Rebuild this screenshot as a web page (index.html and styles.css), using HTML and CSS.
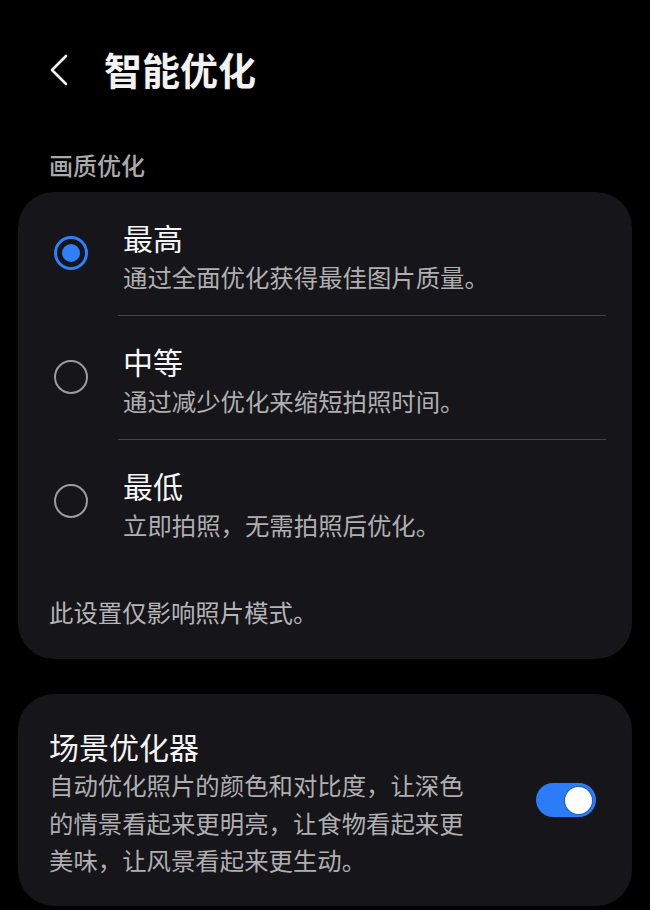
FILE: index.html
```html
<!DOCTYPE html>
<html lang="zh-CN">
<head>
    <meta charset="UTF-8">
    <meta name="viewport" content="width=device-width, initial-scale=1.0">
    <title>智能优化</title>

    <!-- estilo -->
    <link rel="stylesheet" href="styles.css">
</head>
<body>
    <div id="page">
        <!-- encabezado -->
        <div class="header">
            <svg class="backIcon" width="24" height="34" viewBox="0 0 24 34">
                <polyline points="19,3 5,17 19,31" fill="none" stroke="#f2f2f2" stroke-width="2.6" stroke-linecap="round" stroke-linejoin="round"/>
            </svg>
            <h1>智能优化</h1>
        </div>

        <div class="sectionLabel">画质优化</div>

        <!-- calidad -->
        <div class="card">
            <div class="option">
                <span class="radio checked"><span class="dot"></span></span>
                <div class="optionText">
                    <div class="optionTitle">最高</div>
                    <div class="optionDesc">通过全面优化获得最佳图片质量。</div>
                </div>
            </div>
            <div class="divider"></div>
            <div class="option">
                <span class="radio"></span>
                <div class="optionText">
                    <div class="optionTitle">中等</div>
                    <div class="optionDesc">通过减少优化来缩短拍照时间。</div>
                </div>
            </div>
            <div class="divider"></div>
            <div class="option">
                <span class="radio"></span>
                <div class="optionText">
                    <div class="optionTitle">最低</div>
                    <div class="optionDesc">立即拍照，无需拍照后优化。</div>
                </div>
            </div>
            <p class="note">此设置仅影响照片模式。</p>
        </div>

        <!-- escena -->
        <div class="card sceneCard">
            <div class="sceneText">
                <div class="sceneTitle">场景优化器</div>
                <div class="sceneDesc">自动优化照片的颜色和对比度，让深色的情景看起来更明亮，让食物看起来更美味，让风景看起来更生动。</div>
            </div>
            <span class="toggle on"><span class="thumb"></span></span>
        </div>
    </div>
</body>
</html>
```

FILE: styles.css
```css
body {
    margin: 0;
    background-color: #000;
    color: #f2f2f2;
    font-family: "Noto Sans CJK SC", "Noto Sans", sans-serif;
}

#page {
    padding: 44px 18px 0 18px;
}

.header {
    display: flex;
    align-items: center;
    height: 50px;
}

.backIcon {
    margin-left: 29px;
    margin-top: 2px;
}

.header h1 {
    margin: 0 0 0 33px;
    font-size: 38px;
    font-weight: 700;
    line-height: 50px;
}

.sectionLabel {
    margin-top: 55px;
    padding-left: 31px;
    font-size: 24px;
    font-weight: 500;
    line-height: 32px;
    color: #a9a9ab;
}

.card {
    margin-top: 11px;
    background-color: #161519;
    border-radius: 36px;
    padding-bottom: 27px;
}

.option {
    display: flex;
    align-items: flex-start;
    padding: 25px 26px 18px 36px;
}

.radio {
    flex: none;
    display: flex;
    align-items: center;
    justify-content: center;
    width: 34px;
    height: 34px;
    margin-top: 19px;
    border: 2px solid #9c9c9f;
    border-radius: 50%;
    box-sizing: border-box;
}

.radio.checked {
    border: 3.5px solid #2f7ff7;
}

.dot {
    width: 18px;
    height: 18px;
    border-radius: 50%;
    background-color: #2f7ff7;
}

.optionText {
    margin-left: 35px;
}

.optionTitle {
    font-size: 30px;
    line-height: 40px;
    color: #f4f4f4;
}

.optionDesc {
    font-size: 24.4px;
    line-height: 40px;
    color: #afafb1;
}

.divider {
    height: 1px;
    margin: 0 26px 0 100px;
    background-color: #444348;
}

.note {
    margin: 29px 0 0 0;
    padding-left: 31px;
    font-size: 24.4px;
    line-height: 40px;
    color: #b4b4b6;
}

.sceneCard {
    display: flex;
    align-items: center;
    justify-content: space-between;
    margin-top: 35px;
    padding: 32px 36px 27px 31px;
}

.sceneText {
    width: 420px;
}

.sceneTitle {
    font-size: 30px;
    line-height: 40px;
    color: #f4f4f4;
}

.sceneDesc {
    font-size: 24.4px;
    line-height: 37.5px;
    color: #afafb1;
}

.toggle {
    flex: none;
    display: flex;
    align-items: center;
    justify-content: flex-end;
    width: 60px;
    height: 34px;
    margin-top: -4px;
    padding: 0 4px;
    border-radius: 17px;
    background-color: #2b7cf6;
    box-sizing: border-box;
}

.thumb {
    width: 27px;
    height: 27px;
    border-radius: 50%;
    background-color: #fff;
    box-shadow: 0 0 0 1px #1d5fc4;
}
```
